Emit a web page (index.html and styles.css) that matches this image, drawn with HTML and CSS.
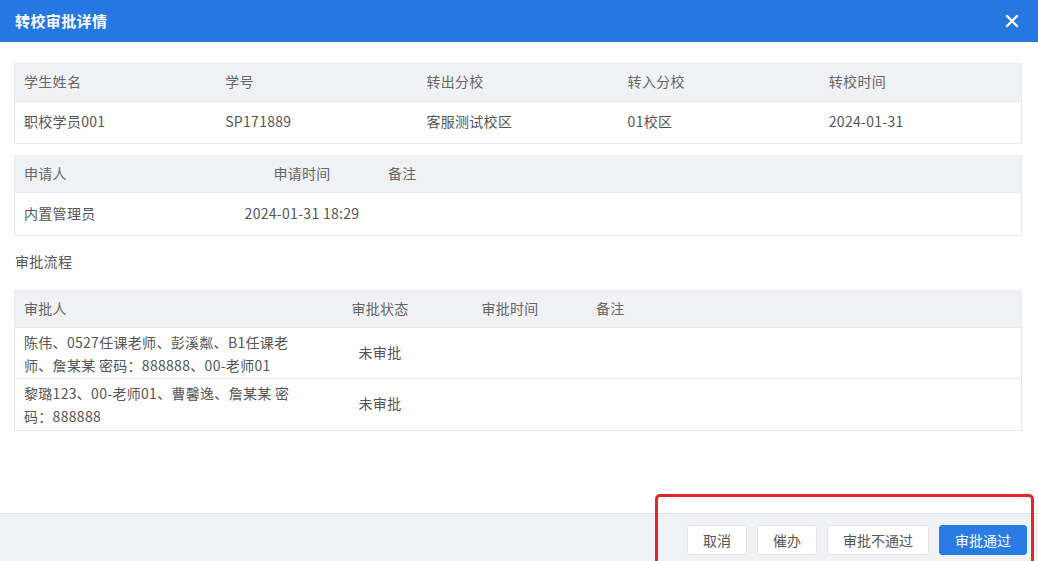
FILE: index.html
```html
<!DOCTYPE html>
<html lang="zh-CN">
<head>
<meta charset="utf-8">
<title>转校审批详情</title>
<link rel="stylesheet" href="styles.css">
</head>
<body>
<div class="dialog">
  <div class="dlg-header">
    <span class="dlg-title">转校审批详情</span>
    <span class="dlg-close" aria-label="关闭">
      <svg width="14" height="14" viewBox="0 0 14 14"><path d="M2 2 L12 12 M12 2 L2 12" stroke="#fff" stroke-width="2.4" stroke-linecap="round"/></svg>
    </span>
  </div>
  <div class="dlg-body">
    <div class="tbl tbl-info">
      <div class="row head">
        <div class="cell">学生姓名</div>
        <div class="cell">学号</div>
        <div class="cell">转出分校</div>
        <div class="cell">转入分校</div>
        <div class="cell">转校时间</div>
      </div>
      <div class="row">
        <div class="cell">职校学员001</div>
        <div class="cell">SP171889</div>
        <div class="cell">客服测试校区</div>
        <div class="cell">01校区</div>
        <div class="cell">2024-01-31</div>
      </div>
    </div>

    <div class="tbl tbl-apply">
      <div class="row head">
        <div class="cell">申请人</div>
        <div class="cell center">申请时间</div>
        <div class="cell">备注</div>
      </div>
      <div class="row">
        <div class="cell">内置管理员</div>
        <div class="cell center">2024-01-31 18:29</div>
        <div class="cell"></div>
      </div>
    </div>

    <div class="section-label">审批流程</div>

    <div class="tbl tbl-flow">
      <div class="row head">
        <div class="cell">审批人</div>
        <div class="cell center">审批状态</div>
        <div class="cell center">审批时间</div>
        <div class="cell remark">备注</div>
      </div>
      <div class="row tall">
        <div class="cell wrap">陈伟、0527任课老师、彭溪粼、B1任课老师、詹某某 密码：888888、00-老师01</div>
        <div class="cell center">未审批</div>
        <div class="cell center"></div>
        <div class="cell remark"></div>
      </div>
      <div class="row tall last">
        <div class="cell wrap">黎璐123、00-老师01、曹馨逸、詹某某 密码：888888</div>
        <div class="cell center">未审批</div>
        <div class="cell center"></div>
        <div class="cell remark"></div>
      </div>
    </div>
  </div>
  <div class="dlg-footer">
    <button class="btn">取消</button>
    <button class="btn">催办</button>
    <button class="btn">审批不通过</button>
    <button class="btn primary">审批通过</button>
  </div>
  <div class="annotation"></div>
</div>
</body>
</html>
```

FILE: styles.css
```css
* { box-sizing: border-box; }
html, body {
  margin: 0;
  padding: 0;
  background: #fff;
  font-family: "Noto Sans CJK SC", "Noto Sans", sans-serif;
  font-size: 14px;
  color: #555;
  letter-spacing: 0.3px;
}
.dialog {
  position: relative;
  width: 1038px;
  height: 561px;
  display: flex;
  flex-direction: column;
  overflow: hidden;
}
.dlg-header {
  height: 42px;
  background: #2777e1;
  display: flex;
  align-items: center;
  justify-content: space-between;
  padding: 0 19px 0 15px;
  border-bottom: 1px solid #2a6fcf;
}
.dlg-title {
  color: #fff;
  font-size: 15px;
  font-weight: bold;
  letter-spacing: 0.4px;
}
.dlg-close {
  display: flex;
  align-items: center;
}
.dlg-body {
  flex: 1;
  padding: 21px 16px 0 14px;
}
.tbl {
  border: 1px solid #e8e9ec;
  border-top: none;
}
.tbl-info { margin-bottom: 11px; }
.row {
  display: grid;
  height: 42px;
  align-items: center;
  border-top: 1px solid #e8e9ec;
}
.tbl-apply .row { height: 43px; }
.row.head, .tbl-apply .row.head {
  height: 38px;
  background: #f0f1f5;
  color: #666;
  border-top-color: #eceef2;
}
.tbl-apply .row.head, .tbl-flow .row.head { height: 37px; }
.cell {
  padding: 0 9px 3px 9px;
  white-space: nowrap;
}
.cell.center { text-align: center; }
.tbl-info .row { grid-template-columns: repeat(5, 1fr); }
.tbl-apply .row { grid-template-columns: 210px 154px 1fr; }
.tbl-flow .row { grid-template-columns: 289px 152px 108px 1fr; }
.tbl-flow .row.tall { height: 51px; }
.tbl-flow .row.tall.last { height: 52px; }
.cell.wrap {
  white-space: normal;
  line-height: 23px;
  padding: 1px 11px 0 9px;
}
.cell.remark { padding-left: 32px; }
.section-label {
  height: 20px;
  line-height: 20px;
  margin: 15px 0 19px 1px;
  color: #555;
}
.dlg-footer {
  height: 48px;
  background: #f0f1f5;
  border-top: 1px solid #e2e4e9;
  display: flex;
  justify-content: flex-end;
  align-items: flex-start;
  gap: 10px;
  padding: 11px 11px 0 0;
}
.btn {
  height: 30px;
  padding: 0 15px;
  border: 1px solid #e3e4e8;
  border-radius: 3px;
  background: #fff;
  color: #555;
  font-family: inherit;
  font-size: 14px;
  line-height: 28px;
  letter-spacing: 0;
}
.btn.primary {
  background: #2a7be4;
  border-color: #2a7be4;
  color: #fff;
}
.annotation {
  position: absolute;
  left: 655px;
  top: 494px;
  width: 379px;
  height: 72px;
  border: 3px solid #e3262b;
  border-radius: 5px;
  pointer-events: none;
}
```
